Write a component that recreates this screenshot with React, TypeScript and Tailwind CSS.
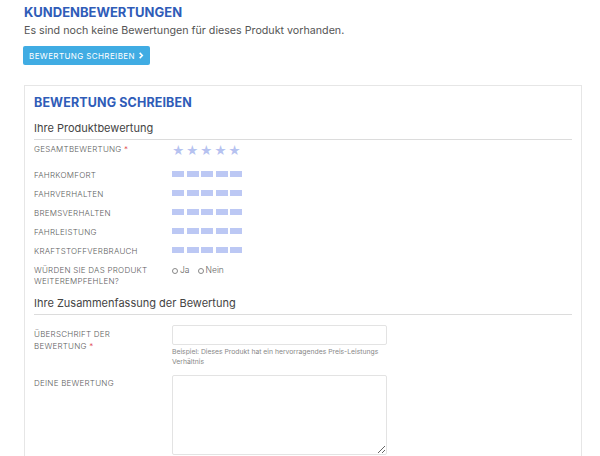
import React from "react";

const Bars = () => (
  <div className="flex gap-[2.5px] pt-[1px]">
    {[0, 1, 2, 3, 4].map((i) => (
      <div key={i} className="w-[12px] h-[6px] bg-[#bcc8f4]" />
    ))}
  </div>
);

const Stars = () => (
  <div className="flex gap-[1.5px] text-[#b6c2f0] text-[12px] leading-none pt-[1px]">
    {[0, 1, 2, 3, 4].map((i) => (
      <span key={i}>★</span>
    ))}
  </div>
);

const Row = ({ label, children, h = "h-[19px]" }: { label: React.ReactNode; children: React.ReactNode; h?: string }) => (
  <div className={`flex ${h}`}>
    <div className="w-[138px] text-[8px] font-light uppercase text-[#5e5e5e] tracking-[0.03em] leading-[11px]">{label}</div>
    <div>{children}</div>
  </div>
);

export default function App() {
  return (
    <div className="w-[600px] h-[456px] overflow-hidden bg-white px-[24px] pt-[4px]" style={{ fontFamily: "Inter, 'Noto Sans', sans-serif" }}>
      <h2 className="text-[13px] font-bold text-[#2f5cb8] leading-[16px]">KUNDENBEWERTUNGEN</h2>
      <p className="text-[10.7px] text-[#555] mt-[4px] leading-[14px]">Es sind noch keine Bewertungen für dieses Produkt vorhanden.</p>
      <button className="mt-[8px] h-[19px] px-[6px] bg-[#40ace3] text-white text-[8px] tracking-[0.05em] rounded-[2px] flex items-center gap-[3px] -ml-[1px]">
        BEWERTUNG SCHREIBEN
        <svg width="6" height="7" viewBox="0 0 6 8" fill="none" stroke="white" strokeWidth="1.8"><path d="M1.5 1l3 3-3 3" /></svg>
      </button>
      <div className="mt-[20px] border border-[#e6e6e6] w-[558px] h-[400px] px-[9px] pt-[9px]">
        <h3 className="text-[12.5px] font-bold text-[#2f5cb8] leading-[16px] tracking-[0.01em]">BEWERTUNG SCHREIBEN</h3>
        <div className="mt-[10px] text-[11px] text-[#444] leading-[14px] pb-[4px] border-b border-[#dcdcdc] w-[538px]">Ihre Produktbewertung</div>
        <div className="mt-[4px] flex h-[26px]">
          <div className="w-[138px] text-[8px] font-light text-[#5e5e5e] tracking-[0.03em] leading-[11px]">GESAMTBEWERTUNG <span className="text-[#e0434b]">*</span></div>
          <Stars />
        </div>
        <Row label="Fahrkomfort"><Bars /></Row>
        <Row label="Fahrverhalten"><Bars /></Row>
        <Row label="Bremsverhalten"><Bars /></Row>
        <Row label="Fahrleistung"><Bars /></Row>
        <Row label="Kraftstoffverbrauch"><Bars /></Row>
        <Row label={<>Würden Sie das Produkt<br />Weiterempfehlen?</>} h="h-[31px]">
          <div className="flex items-center gap-[8px] text-[8.5px] font-light text-[#5e5e5e] leading-[11px]">
            <label className="flex items-center gap-[2px]"><span className="w-[6px] h-[6px] rounded-full border border-[#888] inline-block" />Ja</label>
            <label className="flex items-center gap-[2px]"><span className="w-[6px] h-[6px] rounded-full border border-[#888] inline-block" />Nein</label>
          </div>
        </Row>
        <div className="text-[11px] text-[#444] leading-[14px] pb-[4px] border-b border-[#dcdcdc] w-[538px]">Ihre Zusammenfassung der Bewertung</div>
        <div className="mt-[10px] flex">
          <div className="w-[138px] pt-[3px] text-[8px] font-light text-[#5e5e5e] tracking-[0.03em] leading-[12px]">ÜBERSCHRIFT DER<br />BEWERTUNG <span className="text-[#e0434b]">*</span></div>
          <div>
            <div className="w-[215px] h-[20px] border border-[#e3e3e3] rounded-[2px]" />
            <div className="mt-[2px] text-[6.8px] text-[#888] leading-[10px] w-[215px]">Beispiel: Dieses Produkt hat ein hervorragendes Preis-Leistungs Verhältnis</div>
          </div>
        </div>
        <div className="mt-[8px] flex">
          <div className="w-[138px] pt-[2px] text-[8px] font-light text-[#5e5e5e] tracking-[0.03em] leading-[12px]">DEINE BEWERTUNG</div>
          <textarea className="w-[215px] h-[80px] border border-[#e3e3e3] rounded-[2px] resize-y" />
        </div>
      </div>
    </div>
  );
}
